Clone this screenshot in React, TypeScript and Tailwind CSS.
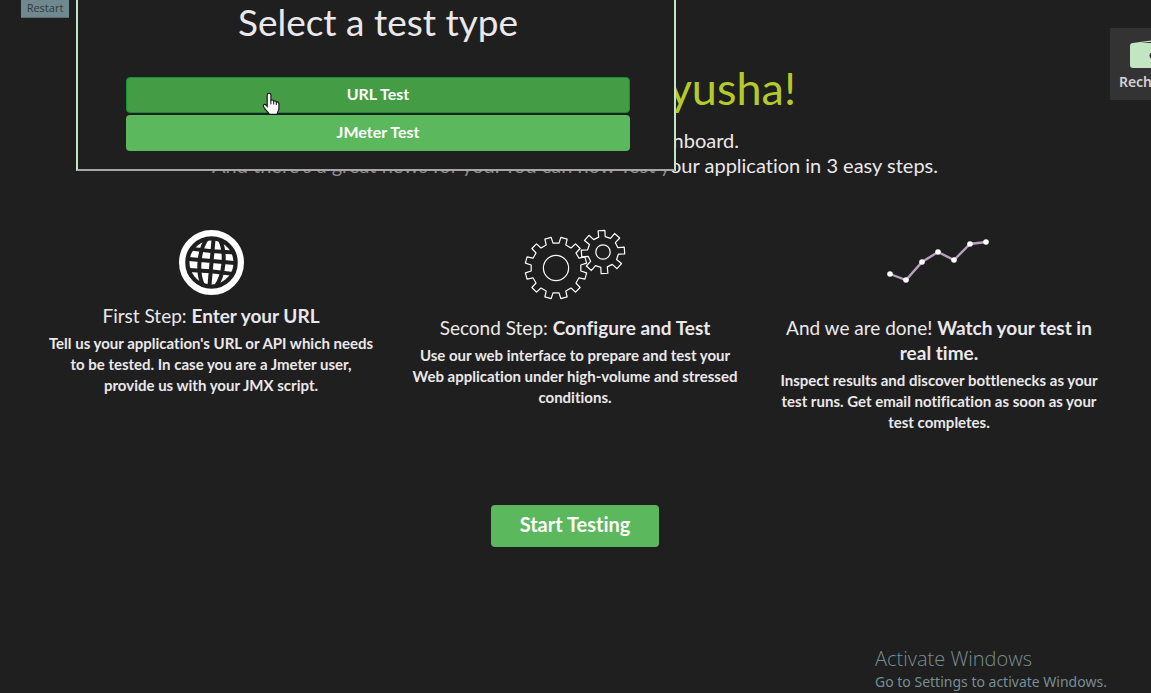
import React from "react";

type Gear = { cx: number; cy: number; outer: number; root: number; teeth: number; turn: number };

function gearPath({ cx, cy, outer, root, teeth, turn }: Gear): string {
  const step = 360 / teeth;
  const corners: string[] = [];
  for (let i = 0; i < teeth; i++) {
    const mid = i * step + turn - 90;
    const profile: [number, number][] = [
      [-0.27, root],
      [-0.2, outer],
      [0.2, outer],
      [0.27, root],
    ];
    for (const [offset, radius] of profile) {
      const a = ((mid + offset * step) * Math.PI) / 180;
      corners.push(`${(cx + radius * Math.cos(a)).toFixed(2)} ${(cy + radius * Math.sin(a)).toFixed(2)}`);
    }
  }
  return `M${corners.join("L")}Z`;
}

function GlobeIcon() {
  return (
    <svg width="66" height="66" viewBox="-33.5 -33.5 66 66" aria-hidden="true">
      <circle r="29.4" fill="none" stroke="#fff" strokeWidth="6.2" />
      <g transform="rotate(5)">
        <circle r="22" fill="#fff" />
        <g fill="none" stroke="#1f1f1f" strokeWidth="4">
          <path d="M0-23V23M-23-1.5H23M-22-12Q0-10.5 22-12M-22 9.5Q0 8 22 9.5" />
          <path d="M-6-24C-14-12-14 12-6 24M6-24C14-12 14 12 6 24" />
        </g>
      </g>
    </svg>
  );
}

function GearsIcon() {
  return (
    <svg width="102" height="72" viewBox="524 229 102 72" aria-hidden="true">
      <g fill="none" stroke="#fff" strokeWidth="1.2" strokeLinejoin="round">
        <path d={gearPath({ cx: 556, cy: 268, outer: 31, root: 25, teeth: 12, turn: 15 })} />
        <circle cx="556" cy="268" r="12.6" />
        <path d={gearPath({ cx: 603, cy: 252, outer: 21.8, root: 15.5, teeth: 8, turn: -4 })} />
        <circle cx="603" cy="252" r="7.2" />
      </g>
    </svg>
  );
}

const points: [number, number][] = [
  [2, 45],
  [18, 51],
  [34, 33],
  [50, 23],
  [66, 31],
  [82, 15],
  [98, 13],
];

function ChartIcon() {
  return (
    <svg className="overflow-visible" width="102" height="72" viewBox="0 0 102 72" aria-hidden="true">
      <polyline points={points.map((p) => p.join(",")).join(" ")} fill="none" stroke="#b99fbe" strokeWidth="2.4" />
      {points.map(([x, y]) => (
        <circle key={x} cx={x} cy={y} r="2.8" fill="#fff" />
      ))}
    </svg>
  );
}

function HandCursor() {
  return (
    <svg className="absolute left-[261px] top-[91px]" width="20" height="26" viewBox="0 0 20 26" aria-hidden="true">
      <path
        d="M8 2.2c1.2 0 1.9.8 1.9 1.9v5.2c.5-.5 2.4-.4 2.8.8.8-.5 2.3-.2 2.6.9 1.4-.4 2.6.4 2.6 1.8v4.5c0 2.6-1.6 3.6-1.8 6.1H8.3c-.4-2.5-4.7-4.7-5.8-8.1-.5-1.6 1.3-2.5 2.5-1.3l1.2 1.5V4.1C6.2 3 6.9 2.2 8 2.2Z"
        fill="#fff"
        stroke="#111"
        strokeWidth="1.1"
      />
      <path d="M9.9 9.3v4M12.7 10.1v3.4M15.3 11v3" stroke="#111" strokeWidth="1" fill="none" />
    </svg>
  );
}

function Step({
  icon,
  iconBox,
  title,
  lines,
}: {
  icon: React.ReactNode;
  iconBox: string;
  title: React.ReactNode;
  lines: string[];
}) {
  return (
    <section className="px-4 text-center">
      <div className={`flex items-start justify-center ${iconBox}`}>{icon}</div>
      <h2 className="text-[19px] leading-[25px]">{title}</h2>
      <p className="mt-[5px] text-[15px] font-bold leading-[21px]">
        {lines.map((line) => (
          <span key={line} className="block whitespace-nowrap">
            {line}
          </span>
        ))}
      </p>
    </section>
  );
}

export default function App() {
  return (
    <div className="relative min-h-screen overflow-hidden bg-[#1f1f1f] font-['Lato',sans-serif] text-[#ebe8eb] [font-variant-ligatures:none]">
      <main className="pl-[29px] pr-[30px] pt-[60px]">
        <header className="flex flex-col items-center">
          <h1 className="w-[442px] text-right text-[45px] leading-[56px] text-[#b4c92c]">yusha!</h1>
          <p className="mt-3 w-[328px] text-right text-[20px] leading-[25px]">nboard.</p>
          <p className="whitespace-nowrap text-[20px] leading-[25px]">
            <span className="text-[#8f8a8f]">And there's a great news for you. You can now Test y</span>our application in 3
            easy steps.
          </p>
        </header>

        <div className="mt-[51px] grid grid-cols-3">
          <Step
            icon={<GlobeIcon />}
            iconBox="h-[74px]"
            title={
              <>
                First Step: <b>Enter your URL</b>
              </>
            }
            lines={[
              "Tell us your application's URL or API which needs",
              "to be tested. In case you are a Jmeter user,",
              "provide us with your JMX script.",
            ]}
          />
          <Step
            icon={<GearsIcon />}
            iconBox="h-[86px]"
            title={
              <>
                Second Step: <b>Configure and Test</b>
              </>
            }
            lines={[
              "Use our web interface to prepare and test your",
              "Web application under high-volume and stressed",
              "conditions.",
            ]}
          />
          <Step
            icon={<ChartIcon />}
            iconBox="h-[86px]"
            title={
              <>
                And we are done! <b>Watch your test in</b>
                <br />
                <b>real time.</b>
              </>
            }
            lines={[
              "Inspect results and discover bottlenecks as your",
              "test runs. Get email notification as soon as your",
              "test completes.",
            ]}
          />
        </div>

        <div className="mt-[72px] flex justify-center">
          <button type="button" className="h-[42px] w-[168px] rounded bg-[#5cb85c] pb-1 text-[20px] font-bold text-white">
            Start Testing
          </button>
        </div>
      </main>

      <button
        type="button"
        className="absolute left-[21px] top-0 h-[18px] w-[48px] border-b border-[#596e72] bg-[#70898f] pb-[2px] font-['Open_Sans',sans-serif] text-[11px] leading-[15px] text-[#33393b]"
      >
        Restart
      </button>

      <div
        role="dialog"
        aria-labelledby="dialog-title"
        className="absolute left-[76px] top-0 w-[600px] border-x-2 border-b-2 border-x-[#c3e3c4] border-b-[#aaa3aa] bg-[#1f1f1f] pb-[18px] pl-12 pr-11"
      >
        <h2 id="dialog-title" className="pb-[33px] text-center text-[37px] leading-[44px]">
          Select a test type
        </h2>
        <div className="flex flex-col gap-[2px]">
          <button type="button" className="h-9 rounded border border-[#12913a] bg-[#449d44] pb-[2px] text-[16px] font-bold text-white">
            URL Test
          </button>
          <button type="button" className="h-9 rounded bg-[#5cb85c] pb-[2px] text-[16px] font-bold text-white">
            JMeter Test
          </button>
        </div>
      </div>

      <HandCursor />

      <a
        href="#recharge"
        className="absolute -right-[41px] top-[28px] flex h-[72px] w-[82px] flex-col items-center bg-[#333] pt-3 font-['Noto_Sans',sans-serif] text-[14px] font-semibold leading-[18px] text-[#d3d0d8]"
      >
        <svg width="42" height="32" viewBox="0 0 42 32" aria-hidden="true">
          <path d="M3 3.500 30 0Q34-1 35 3" fill="none" stroke="#c8e4c8" strokeWidth="1.2" />
          <rect x="0" y="3" width="39" height="25" rx="3" fill="#c3e5c4" />
          <path d="M23 12h18v7H23a3.500 3.500 0 0 1 0-7Z" fill="#333" />
        </svg>
        <span className="mt-px">Recharge</span>
      </a>

      <aside className="absolute bottom-0 right-[40px] w-[236px] whitespace-nowrap font-['Noto_Sans',sans-serif] text-[#788e95]">
        <p className="font-['Open_Sans',sans-serif] text-[20px] font-light leading-[24px]">Activate Windows</p>
        <p className="text-[14px] leading-[22px]">Go to Settings to activate Windows.</p>
      </aside>
    </div>
  );
}
